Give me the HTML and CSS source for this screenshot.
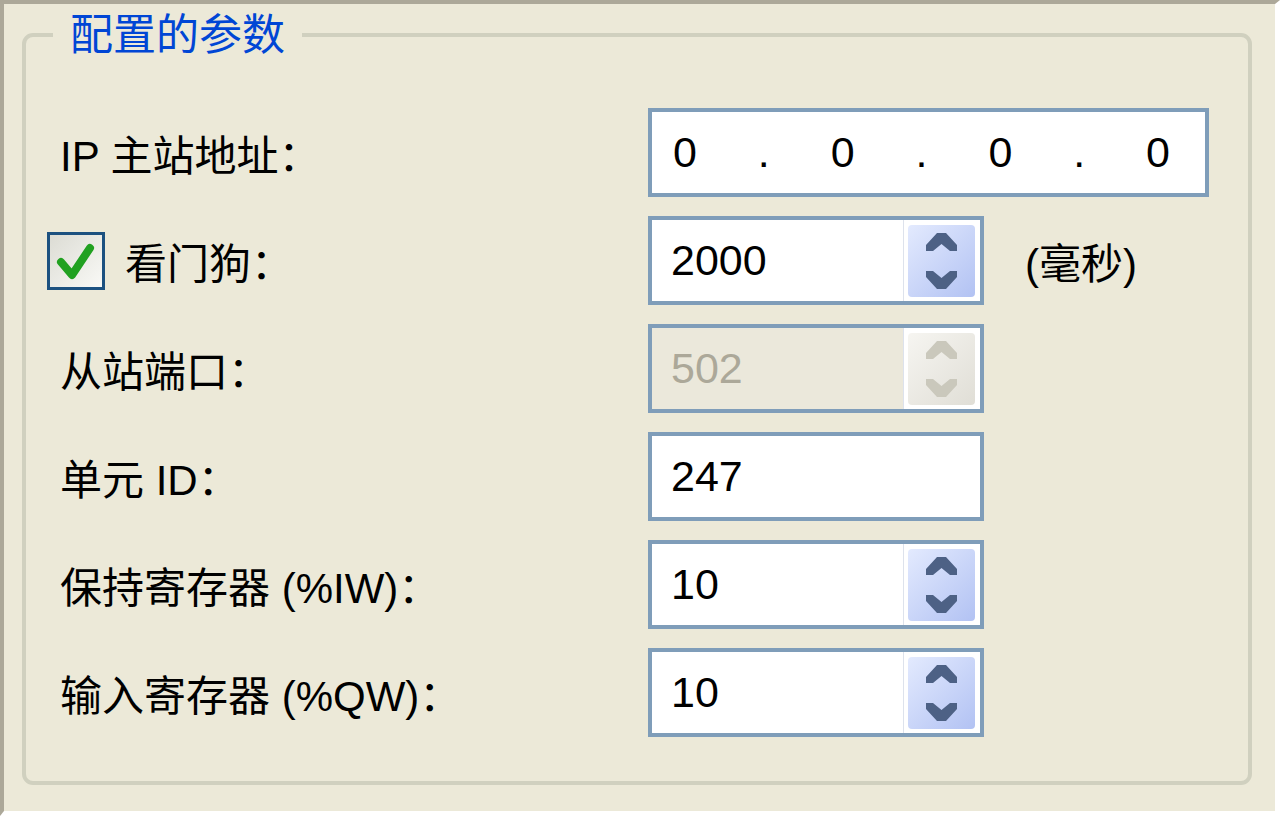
FILE: index.html
```html
<!DOCTYPE html>
<html lang="zh-CN">
<head>
  <meta charset="UTF-8" />
  <meta name="viewport" content="width=device-width, initial-scale=1.0"/>
  <title>配置的参数</title>
  <link rel="stylesheet" href="styles.css">
</head>
<body>
  <div class="window">
    <fieldset class="group">
      <legend>配置的参数</legend>
      <div class="form">
        <!-- IP -->
        <label class="label">IP 主站地址：</label>
        <div class="field ip-field">
          <span>0</span><span>.</span><span>0</span><span>.</span><span>0</span><span>.</span><span>0</span>
        </div>

        <!-- watchdog -->
        <label class="label check-label">
          <span class="checkbox">
            <svg width="52" height="52" viewBox="0 0 52 52">
              <polyline points="11,27 22,40 40,13" fill="none" stroke="#21a121" stroke-width="8" stroke-linecap="round" stroke-linejoin="round"/>
            </svg>
          </span>
          看门狗：
        </label>
        <div class="field">
          <div class="value">2000</div>
          <div class="spin">
            <div class="spin-btn">
              <svg width="67" height="72" viewBox="0 0 67 72">
                <path d="M18,20 L29,8 L38,8 L49,20 L49,26 L42,26 L33.5,19 L25,26 L18,26 Z"/>
                <path d="M18,52 L29,64 L38,64 L49,52 L49,46 L42,46 L33.5,53 L25,46 L18,46 Z"/>
              </svg>
            </div>
          </div>
        </div>
        <span class="unit">(毫秒)</span>

        <!-- slave port (disabled) -->
        <label class="label">从站端口：</label>
        <div class="field disabled">
          <div class="value">502</div>
          <div class="spin">
            <div class="spin-btn">
              <svg width="67" height="72" viewBox="0 0 67 72">
                <path d="M18,20 L29,8 L38,8 L49,20 L49,26 L42,26 L33.5,19 L25,26 L18,26 Z"/>
                <path d="M18,52 L29,64 L38,64 L49,52 L49,46 L42,46 L33.5,53 L25,46 L18,46 Z"/>
              </svg>
            </div>
          </div>
        </div>
        <span></span>

        <!-- unit id -->
        <label class="label">单元 ID：</label>
        <div class="field">
          <div class="value">247</div>
        </div>
        <span></span>

        <!-- holding registers -->
        <label class="label">保持寄存器 (%IW)：</label>
        <div class="field">
          <div class="value">10</div>
          <div class="spin">
            <div class="spin-btn">
              <svg width="67" height="72" viewBox="0 0 67 72">
                <path d="M18,20 L29,8 L38,8 L49,20 L49,26 L42,26 L33.5,19 L25,26 L18,26 Z"/>
                <path d="M18,52 L29,64 L38,64 L49,52 L49,46 L42,46 L33.5,53 L25,46 L18,46 Z"/>
              </svg>
            </div>
          </div>
        </div>
        <span></span>

        <!-- input registers -->
        <label class="label">输入寄存器 (%QW)：</label>
        <div class="field">
          <div class="value">10</div>
          <div class="spin">
            <div class="spin-btn">
              <svg width="67" height="72" viewBox="0 0 67 72">
                <path d="M18,20 L29,8 L38,8 L49,20 L49,26 L42,26 L33.5,19 L25,26 L18,26 Z"/>
                <path d="M18,52 L29,64 L38,64 L49,52 L49,46 L42,46 L33.5,53 L25,46 L18,46 Z"/>
              </svg>
            </div>
          </div>
        </div>
        <span></span>
      </div>
    </fieldset>
  </div>
</body>
</html>
```

FILE: styles.css
```css
* {
  box-sizing: border-box;
}

body {
  margin: 0;
  padding: 0;
  font-family: "Liberation Sans", "Noto Sans CJK SC", sans-serif;
  color: #000;
  background: #ece9d8;
}

.window {
  width: 1280px;
  height: 816px;
  display: flex;
  flex-direction: column;
  background: #ece9d8;
  border-top: 4px solid #aca899;
  border-left: 4px solid #aca899;
  border-right: 5px solid #fff;
  border-bottom: 5px solid #fff;
}

.group {
  flex: 1;
  margin: 6px 23px 26px 18px;
  padding: 0;
  border: 4px solid #d0d0bf;
  border-radius: 11px;
  min-width: 0;
}

.group legend {
  margin-left: 27px;
  padding: 0 17px;
  font-size: 43px;
  line-height: 50px;
  color: #0046d5;
}

.form {
  display: grid;
  grid-template-columns: 588px 336px 1fr;
  grid-auto-rows: 89px;
  row-gap: 19px;
  padding: 48px 0 0 34px;
}

.label {
  display: flex;
  align-items: center;
  font-size: 42px;
  white-space: nowrap;
}

.check-label {
  margin-left: -13px;
}

.checkbox {
  width: 58px;
  height: 58px;
  margin-right: 20px;
  border: 3px solid #1c5180;
  background: linear-gradient(135deg, #dcdcd4, #f9f9f6);
  display: flex;
}

.field {
  display: flex;
  background: #fff;
  border: 4px solid #7f9db9;
  font-size: 43px;
}

.value {
  flex: 1;
  display: flex;
  align-items: center;
  padding-left: 19px;
}

.ip-field {
  grid-column: 2 / 4;
  width: 561px;
  align-items: center;
  justify-content: space-between;
  padding: 0 35px 0 21px;
}

.spin {
  width: 77px;
  padding: 5px 5px 4px 4px;
  border-left: 1px solid #dde2ec;
  background: #fff;
}

.spin-btn {
  height: 100%;
  border-radius: 4px;
  background: linear-gradient(135deg, #e3eafe, #b2c2f3);
}

.spin-btn svg {
  display: block;
  fill: #4d6185;
}

.disabled {
  background: #ebe8db;
  color: #aca899;
}

.disabled .spin-btn {
  background: linear-gradient(135deg, #f6f5f1, #e0ded6);
}

.disabled .spin-btn svg {
  fill: #cac8bc;
}

.unit {
  display: flex;
  align-items: center;
  padding-left: 41px;
  font-size: 42px;
}
```
